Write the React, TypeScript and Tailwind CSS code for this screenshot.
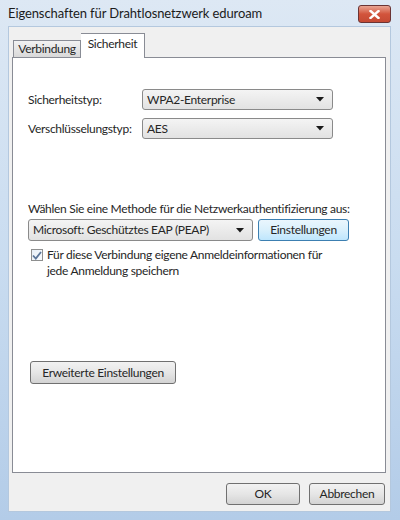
import React from "react"

function Combo({ value, className }: { value: string; className: string }) {
    return (
        <div className={"flex items-center justify-between rounded-[3px] border border-[#8a8a8a] bg-gradient-to-b from-[#f4f4f4] to-[#e2e2e2] pl-[4px] pr-[8px] " + className}>
            <span>{value}</span>
            <svg width="8" height="5" viewBox="0 0 8 5"><path d="M0 0 H8 L4 4.5 Z" fill="#1a1a1a" /></svg>
        </div>
    )
}

function Btn({ label, className }: { label: string; className: string }) {
    return (
        <div className={"flex items-center justify-center rounded-[3px] border border-[#707070] bg-gradient-to-b from-[#f2f2f2] via-[#e6e6e6] to-[#d3d3d3] " + className}>
            {label}
        </div>
    )
}

export default function App() {
    return (
        <div className="w-[400px] h-[520px] flex flex-col bg-gradient-to-b from-[#dde8f4] via-[#c9dcf0] to-[#b3cce8] text-[12px] text-[#262626] [font-family:Lato,'Noto_Sans',sans-serif] tracking-[-0.3px] leading-[16px]">
            {/* title bar */}
            <div className="h-[26px] flex items-start justify-between pl-[8px] pr-[9px] pt-[5px]">
                <span className="text-[13px] text-[#1b1b1b] leading-[17px] tracking-[-0.1px]">Eigenschaften für Drahtlosnetzwerk eduroam</span>
                <div className="w-[33px] h-[18px] rounded-[3px] border border-[#6b3434] bg-gradient-to-b from-[#e8a493] via-[#d2543c] to-[#c54a34] flex items-center justify-center">
                    <svg width="11" height="9" viewBox="0 0 11 9">
                        <path d="M1.5 1 L9.5 8 M9.5 1 L1.5 8" stroke="#ffffff" strokeWidth="2.4" strokeLinecap="square" />
                    </svg>
                </div>
            </div>

            {/* client */}
            <div className="flex-1 ml-[8px] mr-[9px] mb-[8px] bg-[#f0f0f0] border border-[#b4c8de] flex flex-col pt-[6px] pl-[3px] pr-[4px]">
                {/* tabs */}
                <div className="flex items-end pl-[1px] h-[24px] relative z-10">
                    <div className="w-[68px] h-[17px] border border-b-0 border-[#898c95] bg-gradient-to-b from-[#f2f2f2] to-[#d9d9d9] flex items-center justify-center">Verbindung</div>
                    <div className="w-[64px] h-[25px] border border-b-0 border-l-0 border-[#898c95] bg-white flex justify-center items-start pt-[2px] -mb-[1px]">Sicherheit</div>
                </div>
                <div className="h-[416px] bg-white border border-[#898c95] flex flex-col pl-[15px]">
                    <div className="mt-[31px] flex items-center h-[21px]">
                        <span className="w-[114px]">Sicherheitstyp:</span>
                        <Combo value="WPA2-Enterprise" className="w-[191px] h-[21px]" />
                    </div>
                    <div className="mt-[8px] flex items-center h-[21px]">
                        <span className="w-[114px]">Verschlüsselungstyp:</span>
                        <Combo value="AES" className="w-[191px] h-[21px]" />
                    </div>

                    <div className="mt-[62px]">Wählen Sie eine Methode für die Netzwerkauthentifizierung aus:</div>
                    <div className="mt-[2px] flex items-center gap-[5px]">
                        <Combo value="Microsoft: Geschütztes EAP (PEAP)" className="w-[225px] h-[22px]" />
                        <div className="w-[91px] h-[22px] rounded-[3px] border border-[#3c7fb1] bg-gradient-to-b from-[#eaf6fd] via-[#d9f0fc] to-[#bee6fd] flex items-center justify-center">Einstellungen</div>
                    </div>
                    <div className="mt-[6px] flex items-start pl-[3px]">
                        <div className="w-[12px] h-[12px] mt-[2px] border border-[#8e8f8f] bg-gradient-to-br from-[#e6eef6] to-[#f8fbfe] flex items-center justify-center shrink-0">
                            <svg width="10" height="9" viewBox="0 0 10 9">
                                <path d="M1 4.5 L3.8 7.5 L9 1" stroke="#5a7599" strokeWidth="1.8" fill="none" />
                            </svg>
                        </div>
                        <div className="ml-[4px]">Für diese Verbindung eigene Anmeldeinformationen für<br />jede Anmeldung speichern</div>
                    </div>

                    <Btn label="Erweiterte Einstellungen" className="mt-[82px] ml-[2px] w-[146px] h-[23px]" />
                </div>

                {/* bottom buttons */}
                <div className="mt-[10px] flex justify-end gap-[9px] pr-[1px]">
                    <Btn label="OK" className="w-[74px] h-[22px]" />
                    <Btn label="Abbrechen" className="w-[76px] h-[22px]" />
                </div>
            </div>
        </div>
    )
}
